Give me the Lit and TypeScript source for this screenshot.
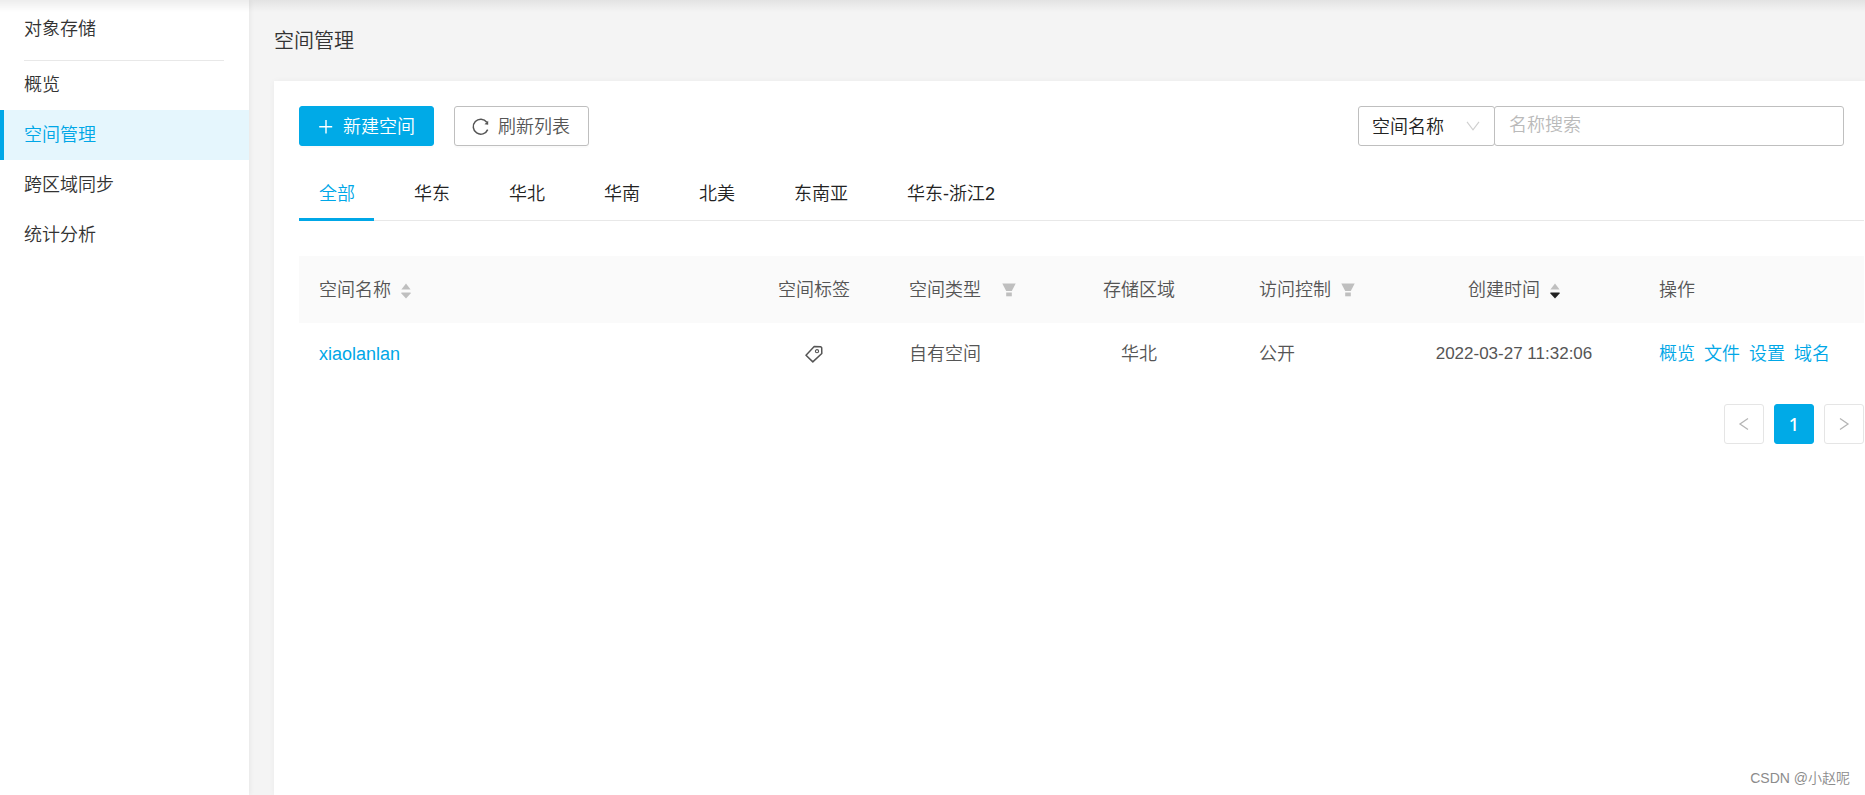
import { LitElement, html, svg, css } from "lit";
import { customElement, state } from "lit/decorators.js";
import { classMap } from "lit/directives/class-map.js";

const MENU = ["概览", "空间管理", "跨区域同步", "统计分析"];
const REGIONS = ["全部", "华东", "华北", "华南", "北美", "东南亚", "华东-浙江2"];
const BUCKETS = [
  { name: "xiaolanlan", type: "自有空间", region: "华北", access: "公开", created: "2022-03-27 11:32:06" },
];
const ACTIONS = ["概览", "文件", "设置", "域名"];

const icon = (cls: string, w: number, h: number, body: unknown) =>
  html`<svg class=${cls} width=${w} height=${h} viewBox="0 0 ${w} ${h}" fill="none" aria-hidden="true">${body}</svg>`;

const plus = () => icon("ico", 18, 18, svg`<path d="M9 2v13.5M2.2 8.8h13" stroke="currentColor" stroke-width="1.4"/>`);
const reload = () =>
  icon("ico", 18, 18, svg`<path d="M14.8 4.2A7.5 7.5 0 1 0 15.7 11.6" stroke="currentColor" stroke-width="1.5"/><path d="M16.2 2.8v4l-3.7-.6z" fill="currentColor"/>`);
const chevron = () => icon("chevron", 14, 10, svg`<path d="M1 .8l6 8 6-8" stroke="currentColor" stroke-width="1.1"/>`);
const sorter = (active = false) =>
  icon("sorter", 10, 16, svg`<path d="M5 0.5l4.6 6H.4z" fill="#bfbfbf"/><path d="M.4 9.6h9.2v1L5 15.5.4 10.6z" fill=${active ? "#222" : "#bfbfbf"}/>`);
const funnel = () =>
  icon("funnel", 14, 14, svg`<path d="M.3.5h13.4L9.8 8H4.2z" fill="#bfbfbf"/><path d="M4.2 9.5h5.6v3.8H4.2z" fill="#bfbfbf"/>`);
const tag = () =>
  icon("tag", 18, 18, svg`<path d="M1 10.2L9.2 1.6l6.6.1.9 1 .1 5.8-9 8.4z" stroke="currentColor" stroke-width="1.5" stroke-linejoin="round"/><circle cx="12" cy="6.2" r="1.6" stroke="currentColor" stroke-width="1.1"/>`);

@customElement("app-root")
export class AppRoot extends LitElement {
  @state() private menu = 1;
  @state() private region = 0;

  static styles = css`
    :host {
      display: flex;
      min-height: 100vh;
      position: relative;
      overflow: hidden;
      background: #f4f4f4;
      color: #555;
      font: 350 18px/26px "Liberation Sans", "Noto Sans CJK SC", sans-serif;
    }
    * { box-sizing: border-box; }
    a { color: #00a7e7; text-decoration: none; }
    button, input, select { font: inherit; color: inherit; margin: 0; }
    button { cursor: pointer; }
    svg { display: block; flex: none; }
    .topshade {
      position: absolute;
      inset: 0 0 auto 0;
      height: 12px;
      background: linear-gradient(rgba(0, 0, 0, 0.07), rgba(0, 0, 0, 0));
      pointer-events: none;
      z-index: 2;
    }
    .side { flex: 0 0 249px; background: #fff; box-shadow: 1px 0 5px rgba(0, 0, 0, 0.06); color: #333; }
    .product { margin: 0 25px 0 24px; padding: 16px 0 18px; border-bottom: 1px solid #e8e8e8; }
    .item { display: block; padding: 12px 20px; border-left: 4px solid transparent; color: #333; }
    .product + .item { padding-top: 11px; }
    .item.on { background: #e5f6fd; border-color: #00a7e7; color: #00a7e7; }
    .main { flex: 1; min-width: 0; display: flex; flex-direction: column; padding-left: 25px; }
    h1 { margin: 0; padding: 26px 0 25px; font-size: 20px; line-height: 30px; font-weight: 350; color: #333; }
    .card { flex: 1; background: #fff; padding: 25px 1px 25px 25px; box-shadow: 0 0 6px rgba(0, 0, 0, 0.04); }
    .bar { display: flex; gap: 20px; padding-right: 20px; }
    .btn {
      display: flex; align-items: center; gap: 8px; height: 40px; width: 135px; padding: 1px 0 0 17px;
      border: 1px solid #bfbfbf; border-radius: 3px; background: #fff; white-space: nowrap;
      box-shadow: 0 2px 1px rgba(0, 0, 0, 0.02);
    }
    .btn.primary { background: #00aae7; border-color: #00aae7; color: #fff; }
    .search { display: flex; margin-left: auto; }
    .pick { display: grid; align-items: center; }
    .pick > * { grid-area: 1 / 1; }
    .pick select {
      appearance: none; width: 137px; height: 40px; padding: 1px 13px 0; border: 1px solid #bfbfbf;
      border-radius: 3px; background: #fff; color: #222; outline: 0;
    }
    .chevron { justify-self: end; margin-right: 15px; color: #cfcfcf; pointer-events: none; }
    .search input {
      width: 350px; height: 40px; margin-left: -1px; padding: 0 14px 2px; border: 1px solid #bfbfbf;
      border-radius: 3px; background: #fff; outline: 0;
    }
    .search input::placeholder { color: #bababa; opacity: 1; }
    .tabs { display: flex; gap: 20px; margin-top: 20px; border-bottom: 1px solid #e8e8e8; }
    .tab {
      margin-bottom: -1px; padding: 15px 19px 11px 20px; border: 0; border-bottom: 3px solid transparent;
      background: none; color: #222; white-space: nowrap;
    }
    .tab.on { color: #00a7e7; border-color: #00a7e7; }
    table { width: 100%; margin-top: 35px; border-collapse: collapse; table-layout: fixed; }
    th { height: 67px; background: #fafafa; font-weight: 350; }
    th, td { padding: 0 20px; text-align: left; white-space: nowrap; }
    td { height: 61px; }
    .mid { text-align: center; }
    .c150 { width: 150px; }
    .c200 { width: 200px; }
    .c250 { width: 250px; }
    .c225 { width: 225px; }
    .head { display: flex; align-items: center; gap: 10px; }
    .head.center { justify-content: center; }
    .head.wide { gap: 21px; }
    .sorter { margin-top: 3px; }
    .num { font-size: 17px; }
    .tagbtn { display: block; margin: 0 auto; padding: 0; border: 0; background: none; }
    .acts { display: flex; gap: 9px; }
    .pages { display: flex; justify-content: flex-end; gap: 10px; margin-top: 20px; }
    .page {
      display: grid; place-items: center; width: 40px; height: 40px; padding: 0;
      border: 1px solid #e5e5e5; border-radius: 3px; background: #fff; color: #b5b5b5;
    }
    .page.on { background: #00aae7; border-color: #00aae7; color: #fff; font: 500 18px/24px "Noto Sans", sans-serif; }
    .mark { position: absolute; right: 15px; bottom: 7px; font-size: 14px; line-height: 20px; color: #8c8c8c; }
  `;

  render() {
    return html`
      <div class="topshade"></div>
      <nav class="side">
        <div class="product">对象存储</div>
        ${MENU.map((t, i) => html`<a href="#" class=${classMap({ item: true, on: i === this.menu })} @click=${() => (this.menu = i)}>${t}</a>`)}
      </nav>
      <main class="main">
        <h1>空间管理</h1>
        <section class="card">
          <div class="bar">
            <button class="btn primary">${plus()}新建空间</button>
            <button class="btn">${reload()}刷新列表</button>
            <div class="search">
              <label class="pick"><select aria-label="空间名称"><option>空间名称</option></select>${chevron()}</label>
              <input type="text" aria-label="名称搜索" placeholder="名称搜索" />
            </div>
          </div>
          <div class="tabs" role="tablist">
            ${REGIONS.map((t, i) => html`<button role="tab" class=${classMap({ tab: true, on: i === this.region })} @click=${() => (this.region = i)}>${t}</button>`)}
          </div>
          <table>
            <thead>
              <tr>
                <th><div class="head">空间名称${sorter()}</div></th>
                <th class="c150 mid">空间标签</th>
                <th class="c150"><div class="head wide">空间类型${funnel()}</div></th>
                <th class="c200 mid">存储区域</th>
                <th class="c150"><div class="head">访问控制${funnel()}</div></th>
                <th class="c250"><div class="head center">创建时间${sorter(true)}</div></th>
                <th class="c225">操作</th>
              </tr>
            </thead>
            <tbody>
              ${BUCKETS.map((b) => html`<tr>
                <td><a href="#">${b.name}</a></td>
                <td><button class="tagbtn" aria-label="空间标签">${tag()}</button></td>
                <td>${b.type}</td>
                <td class="mid">${b.region}</td>
                <td>${b.access}</td>
                <td class="mid num">${b.created}</td>
                <td><div class="acts">${ACTIONS.map((t) => html`<a href="#">${t}</a>`)}</div></td>
              </tr>`)}
            </tbody>
          </table>
          <div class="pages">
            <button class="page" aria-label="上一页">${icon("", 12, 14, svg`<path d="M10 1.5L2 7l8 5.5" stroke="currentColor" stroke-width="1.3"/>`)}</button>
            <button class="page on">1</button>
            <button class="page" aria-label="下一页">${icon("", 12, 14, svg`<path d="M2 1.5L10 7l-8 5.5" stroke="currentColor" stroke-width="1.3"/>`)}</button>
          </div>
        </section>
      </main>
      <div class="mark">CSDN @小赵呢</div>
    `;
  }
}
